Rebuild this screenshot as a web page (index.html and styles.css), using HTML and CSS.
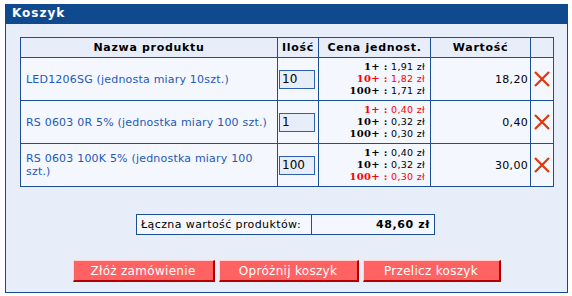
FILE: index.html
```html
<!DOCTYPE html>
<html lang="pl">
<head>
    <meta charset="UTF-8">
    <title>Koszyk</title>
    <link rel="stylesheet" href="styles.css">
</head>
<body>
<div class="panel">
    <div class="panel-title">Koszyk</div>
    <div class="panel-body">
        <table class="cart">
            <colgroup>
                <col class="w-name">
                <col class="w-qty">
                <col class="w-price">
                <col class="w-value">
                <col class="w-del">
            </colgroup>
            <tr>
                <th>Nazwa produktu</th>
                <th>Ilość</th>
                <th>Cena jednost.</th>
                <th>Wartość</th>
                <th></th>
            </tr>
            <tr>
                <td class="c-name"><a href="#">LED1206SG (jednosta miary 10szt.)</a></td>
                <td class="c-qty"><input type="text" value="10"></td>
                <td class="c-price">
                    <div><b>1+ :</b> 1,91 zł</div>
                    <div class="hit"><b>10+ :</b> 1,82 zł</div>
                    <div><b>100+ :</b> 1,71 zł</div>
                </td>
                <td class="c-value">18,20</td>
                <td class="c-del"><svg class="del" width="16" height="16" viewBox="0 0 16 16"><path d="M1 1 L15 15 M15 1 L1 15" stroke="#e0360c" stroke-width="2.2"/></svg></td>
            </tr>
            <tr>
                <td class="c-name"><a href="#">RS 0603 0R 5% (jednostka miary 100 szt.)</a></td>
                <td class="c-qty"><input type="text" value="1"></td>
                <td class="c-price">
                    <div class="hit"><b>1+ :</b> 0,40 zł</div>
                    <div><b>10+ :</b> 0,32 zł</div>
                    <div><b>100+ :</b> 0,30 zł</div>
                </td>
                <td class="c-value">0,40</td>
                <td class="c-del"><svg class="del" width="16" height="16" viewBox="0 0 16 16"><path d="M1 1 L15 15 M15 1 L1 15" stroke="#e0360c" stroke-width="2.2"/></svg></td>
            </tr>
            <tr>
                <td class="c-name"><a href="#">RS 0603 100K 5% (jednostka miary 100 szt.)</a></td>
                <td class="c-qty"><input type="text" value="100"></td>
                <td class="c-price">
                    <div><b>1+ :</b> 0,40 zł</div>
                    <div><b>10+ :</b> 0,32 zł</div>
                    <div class="hit"><b>100+ :</b> 0,30 zł</div>
                </td>
                <td class="c-value">30,00</td>
                <td class="c-del"><svg class="del" width="16" height="16" viewBox="0 0 16 16"><path d="M1 1 L15 15 M15 1 L1 15" stroke="#e0360c" stroke-width="2.2"/></svg></td>
            </tr>
        </table>

        <table class="total">
            <tr>
                <td class="t-label">Łączna wartość produktów:</td>
                <td class="t-sum">48,60 zł</td>
            </tr>
        </table>

        <div class="buttons">
            <button class="btn b1">Złóż zamówienie</button>
            <button class="btn b2">Opróżnij koszyk</button>
            <button class="btn b3">Przelicz koszyk</button>
        </div>
    </div>
</div>
</body>
</html>
```

FILE: styles.css
```css
html, body {
    margin: 0;
    padding: 0;
    background: #ffffff;
}
body {
    padding: 4px 0 0 5px;
    font-family: "DejaVu Sans", Verdana, sans-serif;
    font-size: 11px;
    color: #000000;
}
.panel {
    width: 561px;
    height: 287px;
    border: 1px solid #13498c;
    background: #e8eef9;
}
.panel-title {
    height: 20px;
    line-height: 18px;
    background: #104a8e;
    color: #ffffff;
    font-weight: bold;
    font-size: 12px;
    letter-spacing: 1px;
    padding-left: 6px;
    margin-top: -1px;
}
.panel-body {
    padding: 13px 14px 0 14px;
}
.cart {
    border-collapse: collapse;
    table-layout: fixed;
    width: 533px;
}
.w-name { width: 257px; }
.w-qty { width: 41px; }
.w-price { width: 112px; }
.w-value { width: 100px; }
.w-del { width: 23px; }
.cart th, .cart td {
    border: 1px solid #1d4f97;
    padding: 0;
}
.cart th {
    height: 19px;
    background: #e8eef9;
    font-weight: bold;
    font-size: 11px;
    letter-spacing: 0.7px;
    text-align: center;
}
.cart td {
    height: 42px;
    background: #f4f7fd;
}
td.c-name {
    padding-left: 5px;
    text-align: left;
}
.c-name a {
    color: #2559b5;
    text-decoration: none;
    line-height: 13px;
    letter-spacing: 0.2px;
}
td.c-qty {
    padding-left: 1px;
}
.c-qty input {
    width: 32px;
    height: 17px;
    padding: 0 0 0 2px;
    border: 1px solid #2c60ae;
    background: #e8eef9;
    font-family: "DejaVu Sans", Verdana, sans-serif;
    font-size: 12px;
    color: #000000;
}
td.c-price {
    text-align: right;
    padding-right: 5px;
    font-size: 9.5px;
    line-height: 12px;
    letter-spacing: 0.3px;
}
.c-price b {
    font-family: "DejaVu Serif", serif;
    font-size: 10px;
}
.c-price .hit {
    color: #ff0000;
}
td.c-value {
    text-align: right;
    padding-right: 2px;
    letter-spacing: 0.3px;
}
td.c-del {
    text-align: center;
}
.del {
    display: block;
    margin: 0 auto;
}
.total {
    border-collapse: collapse;
    margin: 27px auto 0 auto;
    position: relative;
    left: -1px;
}
.total td {
    border: 1px solid #1d4f97;
    background: #f4f7fd;
    height: 19px;
    padding: 0 4px;
}
.t-label {
    width: 166px;
    letter-spacing: 0.4px;
}
.t-sum {
    width: 114px;
    text-align: right;
    font-weight: bold;
    letter-spacing: 0.6px;
}
.buttons {
    display: flex;
    justify-content: center;
    gap: 4px;
    margin-top: 25px;
}
.btn {
    height: 22px;
    padding: 0;
    background: #ff6262;
    color: #ffffff;
    font-family: "DejaVu Sans", Verdana, sans-serif;
    font-size: 12px;
    letter-spacing: 0.3px;
    border-top: 1px solid #ffd0d0;
    border-left: 1px solid #ffd0d0;
    border-right: 2px solid #b40000;
    border-bottom: 2px solid #b40000;
}
.b1 { width: 142px; }
.b2 { width: 140px; }
.b3 { width: 138px; }
```
